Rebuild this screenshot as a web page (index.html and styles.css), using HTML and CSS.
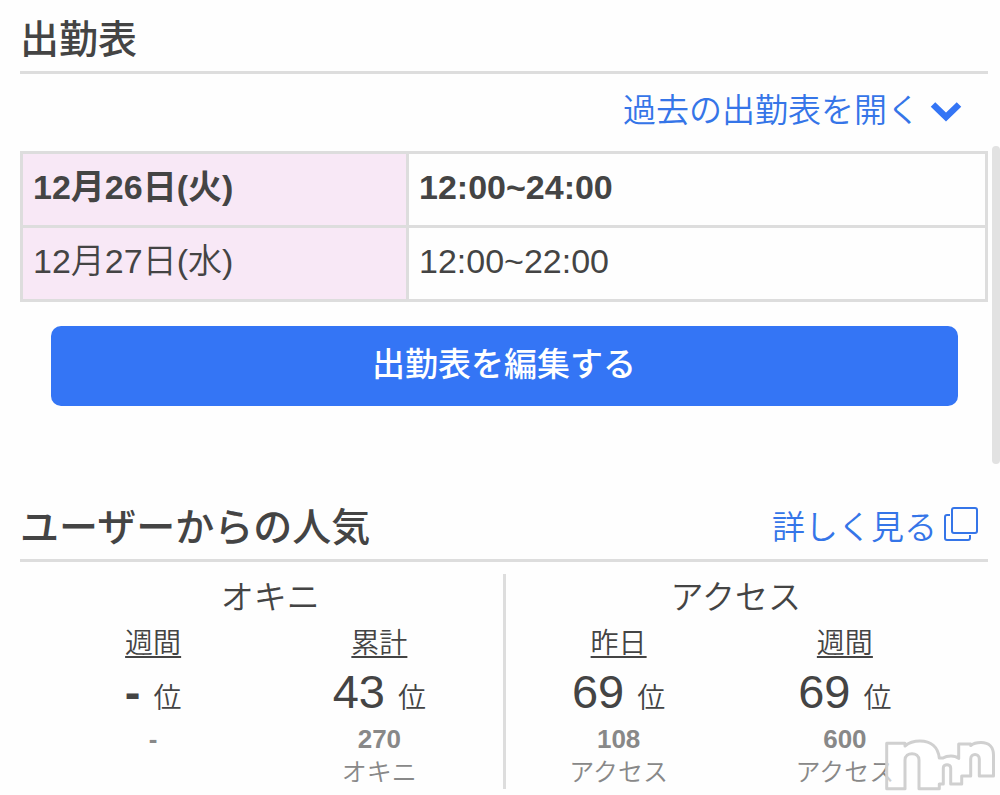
FILE: index.html
```html
<!DOCTYPE html>
<html lang="ja">
<head>
    <meta charset="UTF-8">
    <meta name="viewport" content="width=device-width, initial-scale=1.0">
    <title>出勤表</title>
    <link rel="stylesheet" href="styles.css">
</head>
<body>
    <main class="page">
        <section class="schedule">
            <div class="section-head">
                <h2>出勤表</h2>
            </div>
            <a class="past-link" href="#past">過去の出勤表を開く
                <svg class="chevron" viewBox="0 0 32 22" aria-hidden="true">
                    <path d="M3 4.500l13 12.500 13-12.500" fill="none" stroke="currentColor" stroke-width="6.500"/>
                </svg>
            </a>
            <table class="schedule-table">
                <tr class="today">
                    <th scope="row">12月26日(火)</th>
                    <td>12:00~24:00</td>
                </tr>
                <tr>
                    <th scope="row">12月27日(水)</th>
                    <td>12:00~22:00</td>
                </tr>
            </table>
            <button type="button" class="edit-button">出勤表を編集する</button>
        </section>

        <section class="popularity">
            <div class="section-head">
                <h2>ユーザーからの人気</h2>
                <a class="detail-link" href="#detail">詳しく見る
                    <svg class="window-icon" viewBox="0 0 36 36" fill="none" stroke="currentColor" stroke-width="2" aria-hidden="true">
                        <rect x="9" y="2" width="25" height="25" rx="2"/>
                        <path d="M7 9H4a2 2 0 0 0-2 2v21a2 2 0 0 0 2 2h21a2 2 0 0 0 2-2v-3"/>
                    </svg>
                </a>
            </div>
            <div class="groups">
                <div class="group">
                    <h3>オキニ</h3>
                    <div class="ranks">
                        <div class="rank">
                            <p class="period">週間</p>
                            <p class="place"><b>- </b>位</p>
                            <p class="count">-</p>
                        </div>
                        <div class="rank">
                            <p class="period">累計</p>
                            <p class="place"><span>43 </span>位</p>
                            <p class="count">270</p>
                            <p class="unit">オキニ</p>
                        </div>
                    </div>
                </div>
                <div class="group">
                    <h3>アクセス</h3>
                    <div class="ranks">
                        <div class="rank">
                            <p class="period">昨日</p>
                            <p class="place"><span>69 </span>位</p>
                            <p class="count">108</p>
                            <p class="unit">アクセス</p>
                        </div>
                        <div class="rank">
                            <p class="period">週間</p>
                            <p class="place"><span>69 </span>位</p>
                            <p class="count">600</p>
                            <p class="unit">アクセス</p>
                        </div>
                    </div>
                </div>
            </div>
        </section>
    </main>

    <div class="scroll-thumb"></div>
    <svg class="watermark" viewBox="0 0 114 56" aria-hidden="true">
        <path d="M2.700 7.300H21V10C25 6.500 30 5 36 5C47 5 54 11 55.300 22H59C61 20.700 63.500 20 67 20C70 20 73 21 74.700 22.500V8H86.700V9.500C89 7.500 92.500 6.500 97 6.500C105 6.500 109.500 11 109.500 19V40H95.300V23C95.300 17 86.700 17 86.700 23V40H77.700V48H66.700V32C66.700 27.500 59.300 27.500 59.300 32V48H55.300V52.700H35V24C35 15.500 21 15.500 21 24V52.700H2.700Z"/>
    </svg>
</body>
</html>
```

FILE: styles.css
```css
* {
    box-sizing: border-box;
}
body {
    margin: 0;
    background-color: #fefefe;
    color: #444;
    font-family: "Liberation Sans", "Noto Sans CJK JP", sans-serif;
    font-size: 33px;
    font-weight: 350;
    line-height: 44px;
}
h2, h3, p {
    margin: 0;
}
a {
    color: #3575e8;
    text-decoration: none;
}
.page {
    padding: 12px 12px 0 20px;
}
.section-head {
    display: flex;
    justify-content: space-between;
    align-items: center;
    height: 62px;
    padding-bottom: 4px;
    border-bottom: 3px solid #ddd;
}
.section-head h2 {
    font-size: 39px;
    font-weight: 500;
}
.past-link {
    display: flex;
    justify-content: flex-end;
    align-items: center;
    gap: 10px;
    padding: 15px 26px 18px 0;
}
.chevron {
    width: 32px;
    height: 22px;
    color: #3475f5;
}
.schedule-table {
    width: 100%;
    table-layout: fixed;
    border-collapse: collapse;
}
.schedule-table th, .schedule-table td {
    height: 74px;
    padding: 0 10px 6px;
    border: 3px solid #ddd;
    font-size: 34px;
    font-weight: 350;
    text-align: left;
}
.schedule-table th {
    width: 40%;
    background-color: #f8e8f6;
}
.schedule-table .today th, .schedule-table .today td {
    font-weight: bold;
}
.edit-button {
    display: block;
    width: calc(100% - 61px);
    height: 80px;
    margin: 24px auto 0;
    padding: 0 0 8px;
    border: none;
    border-radius: 10px;
    background-color: #3475f5;
    color: white;
    font-family: inherit;
    font-size: 33px;
    font-weight: 500;
    cursor: pointer;
}
.popularity {
    margin-top: 94px;
}
.detail-link {
    display: flex;
    gap: 6px;
    padding-right: 9px;
}
.window-icon {
    width: 36px;
    height: 36px;
}
.groups {
    display: flex;
    margin-top: 12px;
}
.group {
    flex: 1;
    height: 215px;
    padding: 2px 10px 0 20px;
}
.group + .group {
    padding: 2px 30px 0 0;
    border-left: 3px solid #ddd;
}
.group h3 {
    padding: 0 0 2px 8px;
    font-size: 33px;
    font-weight: 350;
    text-align: center;
}
.ranks {
    display: flex;
}
.rank {
    flex: 1;
    text-align: center;
}
.period {
    font-size: 28px;
    text-decoration: underline;
    text-decoration-thickness: 2px;
    text-underline-offset: 3px;
    text-decoration-skip-ink: none;
}
.place {
    font-size: 28px;
    line-height: 52px;
}
.place span, .place b {
    font-size: 47px;
}
.place b {
    font-weight: bold;
}
.count {
    color: #888;
    font-size: 26px;
    font-weight: bold;
    line-height: 28px;
}
.unit {
    color: #888;
    font-size: 25px;
    line-height: 38px;
}
/* sits over the page edge */
.scroll-thumb {
    position: absolute;
    top: 146px;
    right: 0;
    width: 8px;
    height: 318px;
    border-radius: 4px;
    background-color: #e2e2e2;
}
.watermark {
    position: absolute;
    top: 736px;
    right: 2px;
    width: 114px;
    height: 56px;
    fill: rgba(255, 255, 255, 0.6);
    stroke: #d0d0d0;
    stroke-width: 3;
    stroke-linejoin: round;
}
```
